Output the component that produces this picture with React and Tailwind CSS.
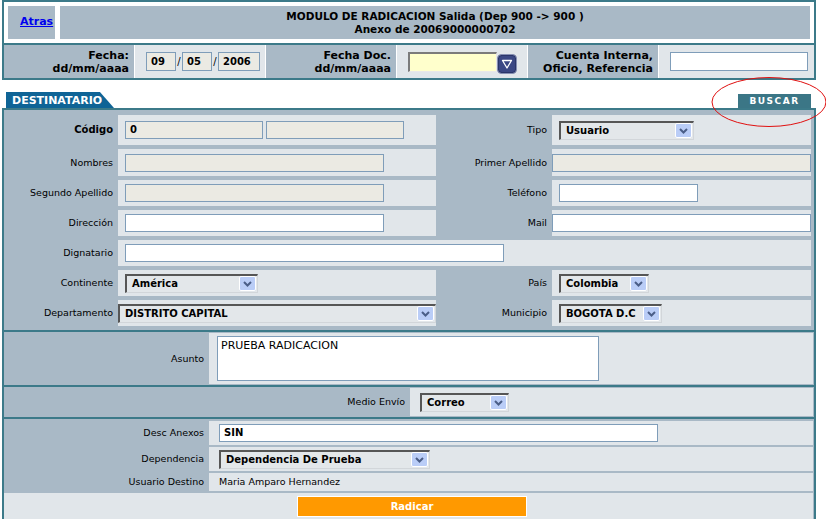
import React from 'react';

const DropBtn = () => (
    <span className="flex h-[15px] w-[17px] shrink-0 items-center justify-center rounded-[2px] border border-white bg-[#bacdf7]">
        <svg width="9" height="6" viewBox="0 0 9 6">
            <path d="M1 1l3.5 3.5L8 1" stroke="#4b5e88" strokeWidth="2" fill="none" />
        </svg>
    </span>
);

const Select = ({ value, className = '' }) => (
    <div className={`flex h-[19px] items-center justify-between border-t-2 border-l-2 border-t-[#565656] border-l-[#565656] border-b border-r border-b-[#d2d6da] border-r-[#d2d6da] bg-[#e3e7ea] pl-[5px] pr-[1px] ${className}`}>
        <span className="text-[10px] font-bold leading-none text-black">{value}</span>
        <DropBtn />
    </div>
);

const Box = ({ value = '', ro = false, bold = false, className = '' }) => (
    <div className={`flex h-[18px] items-center border border-[#7f9db9] pl-[4px] leading-none text-black ${ro ? 'bg-[#ebeae3]' : 'bg-white'} ${bold ? 'text-[10px] font-bold' : 'text-[9.5px]'} ${className}`}>
        {value}
    </div>
);

const Label = ({ children, bold = false }) => (
    <div className={`flex items-center justify-end pr-[5px] leading-none text-black ${bold ? 'text-[10px] font-bold' : 'text-[9.5px]'}`}>
        {children}
    </div>
);

const Cell = ({ children, className = '' }) => (
    <div className={`flex items-center bg-[#e1e6ea] ${className}`}>{children}</div>
);

const Row = ({ className = '', children }) => (
    <div className={`grid grid-cols-[114px_318px_116px_259px] ${className}`}>{children}</div>
);

const HeadLabel = ({ a, b }) => (
    <div className="flex flex-col items-end justify-center bg-[#a9b9c6] pr-[5px] text-[11px] font-bold leading-[13px] text-black">
        <span>{a}</span>
        <span>{b}</span>
    </div>
);

const Slash = () => <span className="w-[6px] text-center text-[10px] leading-none">/</span>;

export default function App() {
    return (
        <div className="relative h-[519px] w-[826px] overflow-hidden bg-white font-['DejaVu_Sans',sans-serif] text-black">
            {/* cabecera */}
            <div className="ml-[2px] flex h-[45px] w-[814px] gap-[5px] border-2 border-[#3c7a89] bg-white p-[4px]">
                <div className="flex w-[47px] items-center bg-[#a9b9c6] pl-[12px]">
                    <a href="#" className="text-[11px] font-bold text-[#0000ee] underline">Atras</a>
                </div>
                <div className="flex flex-1 flex-col items-center justify-center bg-[#a9b9c6] text-[10.5px] font-bold leading-[13px]">
                    <span>MODULO DE RADICACION Salida (Dep 900 -&gt; 900 )</span>
                    <span>Anexo de 20069000000702</span>
                </div>
            </div>

            <div className="ml-[2px] grid h-[35px] w-[814px] grid-cols-[130px_130px_130px_130px_130px_1fr] gap-x-[1px] border-x-2 border-b-2 border-[#3c7a89] bg-white">
                <HeadLabel a="Fecha:" b="dd/mm/aaaa" />
                <Cell className="pl-[11px]">
                    <Box ro bold value="09" className="w-[30px] h-[19px]" />
                    <Slash />
                    <Box ro bold value="05" className="w-[30px] h-[19px]" />
                    <Slash />
                    <Box ro bold value="2006" className="w-[42px] h-[19px]" />
                </Cell>
                <HeadLabel a="Fecha Doc." b="dd/mm/aaaa" />
                <Cell className="pl-[11px]">
                    <div className="h-[20px] w-[89px] border-t-2 border-l-2 border-t-[#7b7b7b] border-l-[#7b7b7b] border-b border-r border-b-[#e8e8e8] border-r-[#e8e8e8] bg-[#ffffcc]" />
                    <svg width="20" height="20" viewBox="0 0 20 20" className="mt-[4px]">
                        <rect x="0.5" y="0.5" width="19" height="19" rx="4" fill="#2b3669" stroke="#8790b4" />
                        <rect x="2" y="2" width="16" height="16" rx="3" fill="#3b4884" />
                        <path d="M5.5 6.5h9L10 14z" fill="none" stroke="#fff" strokeWidth="1.3" strokeLinejoin="round" />
                    </svg>
                </Cell>
                <HeadLabel a="Cuenta Interna," b="Oficio, Referencia" />
                <Cell className="pl-[11px]">
                    <Box className="w-[138px] h-[19px]" />
                </Cell>
            </div>

            {/* pestaña */}
            <div className="flex h-[28px] items-end justify-between pl-[6px] pr-[15px]">
                <div className="flex h-[16px] w-[108px] items-center bg-[#0f6496] pl-[6px] text-[11px] font-bold leading-none text-white [clip-path:polygon(0_0,87%_0,100%_100%,0_100%)]">
                    DESTINATARIO
                </div>
                <button className="flex h-[14px] w-[73px] items-center justify-center bg-[#3b7686] text-[9px] font-bold leading-none tracking-[1.5px] text-white">
                    BUSCAR
                </button>
            </div>

            {/* formulario */}
            <div className="ml-[2px] w-[814px] border-2 border-b-0 border-[#3c7a89] bg-[#a9b9c6]">
                <div className="flex h-[220px] flex-col gap-[4px] pt-[5px]">
                    <Row className="h-[30px]">
                        <Label bold>Código</Label>
                        <Cell className="gap-[3px] pl-[7px]">
                            <Box ro bold value="0" className="w-[138px]" />
                            <Box ro className="w-[138px]" />
                        </Cell>
                        <Label>Tipo</Label>
                        <Cell className="pl-[7px]">
                            <Select value="Usuario" className="w-[135px]" />
                        </Cell>
                    </Row>
                    <Row className="h-[27px]">
                        <Label>Nombres</Label>
                        <Cell className="pl-[7px]">
                            <Box ro className="w-[259px]" />
                        </Cell>
                        <Label>Primer Apellido</Label>
                        <Cell>
                            <Box ro className="w-[259px]" />
                        </Cell>
                    </Row>
                    <Row className="h-[26px]">
                        <Label>Segundo Apellido</Label>
                        <Cell className="pl-[7px]">
                            <Box ro className="w-[259px]" />
                        </Cell>
                        <Label>Teléfono</Label>
                        <Cell className="pl-[7px]">
                            <Box className="w-[139px]" />
                        </Cell>
                    </Row>
                    <Row className="h-[26px]">
                        <Label>Dirección</Label>
                        <Cell className="pl-[7px]">
                            <Box className="w-[259px]" />
                        </Cell>
                        <Label>Mail</Label>
                        <Cell>
                            <Box className="w-[259px]" />
                        </Cell>
                    </Row>
                    <Row className="h-[26px]">
                        <Label>Dignatario</Label>
                        <Cell className="col-span-3 pl-[7px]">
                            <Box className="w-[379px]" />
                        </Cell>
                    </Row>
                    <Row className="h-[26px]">
                        <Label>Continente</Label>
                        <Cell className="pl-[7px]">
                            <Select value="América" className="w-[133px]" />
                        </Cell>
                        <Label>País</Label>
                        <Cell className="pl-[7px]">
                            <Select value="Colombia" className="w-[90px]" />
                        </Cell>
                    </Row>
                    <Row className="h-[26px]">
                        <Label>Departamento</Label>
                        <Cell>
                            <Select value="DISTRITO CAPITAL" className="w-[318px]" />
                        </Cell>
                        <Label>Municipio</Label>
                        <Cell className="pl-[7px]">
                            <Select value="BOGOTA D.C" className="w-[103px]" />
                        </Cell>
                    </Row>
                </div>

                <div className="flex border-t-2 border-[#3c7a89] py-[1px]">
                    <div className="flex h-[51px] w-[205px] items-center justify-end pr-[5px] text-[9.5px] leading-none">Asunto</div>
                    <Cell className="h-[51px] w-[604px] pl-[8px]">
                        <div className="h-[45px] w-[382px] border border-[#7f9db9] bg-white px-[3px] pt-[3px] text-[11px] leading-none">
                            PRUEBA RADICACION
                        </div>
                    </Cell>
                </div>

                <div className="flex border-t-2 border-[#3c7a89] py-[1px]">
                    <div className="flex h-[28px] w-[406px] items-center justify-end pr-[5px] text-[9.5px] leading-none">Medio Envío</div>
                    <Cell className="h-[28px] w-[403px] pl-[10px]">
                        <Select value="Correo" className="w-[89px]" />
                    </Cell>
                </div>

                <div className="flex flex-col gap-[2px] border-t-2 border-[#3c7a89] pt-[2px]">
                    <div className="flex h-[24px]">
                        <div className="flex w-[205px] items-center justify-end pr-[5px] text-[9.5px] leading-none">Desc Anexos</div>
                        <Cell className="w-[604px] pl-[10px]">
                            <Box bold value="SIN" className="w-[439px]" />
                        </Cell>
                    </div>
                    <div className="flex h-[24px]">
                        <div className="flex w-[205px] items-center justify-end pr-[5px] text-[9.5px] leading-none">Dependencia</div>
                        <Cell className="w-[604px] pl-[10px]">
                            <Select value="Dependencia De Prueba" className="w-[211px]" />
                        </Cell>
                    </div>
                    <div className="flex h-[18px]">
                        <div className="flex w-[205px] items-center justify-end pr-[5px] text-[9.5px] leading-none">Usuario Destino</div>
                        <Cell className="w-[604px] pl-[10px] text-[9.5px] leading-none">Maria Amparo Hernandez</Cell>
                    </div>
                    <div className="flex h-[40px] w-[809px] justify-center bg-[#e1e6ea] pt-[3px]">
                        <button className="ml-[7px] h-[21px] w-[230px] border border-white bg-[#ff9900] text-[10px] font-bold leading-none text-white">
                            Radicar
                        </button>
                    </div>
                </div>
            </div>

            <svg className="pointer-events-none absolute left-0 top-0" width="826" height="519">
                <ellipse cx="769" cy="102" rx="57" ry="24.5" fill="none" stroke="#e01010" strokeWidth="1" />
            </svg>
        </div>
    );
}
